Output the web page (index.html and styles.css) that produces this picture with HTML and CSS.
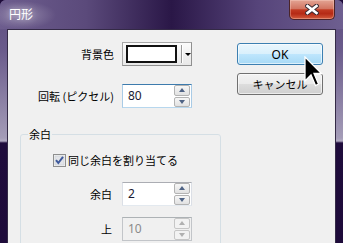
FILE: index.html
```html
<!DOCTYPE html>
<html lang="ja">
<head>
    <meta charset="UTF-8">
    <meta name="viewport" content="width=device-width, initial-scale=1.0">
    <title>円形</title>
    <link rel="stylesheet" href="styles.css">
</head>
<body>
    <div class="window">
        <!-- タイトルバー -->
        <div class="titlebar">
            <span class="title">円形</span>
            <button class="close" title="閉じる">
                <svg width="14" height="11" viewBox="0 0 14 11">
                    <path d="M2.5 2 L11.5 9 M11.5 2 L2.5 9" stroke="#3b2b33" stroke-width="4.6" stroke-linecap="square"/>
                    <path d="M2.5 2 L11.5 9 M11.5 2 L2.5 9" stroke="#fff" stroke-width="2.6" stroke-linecap="square"/>
                </svg>
            </button>
        </div>

        <div class="client">
            <div class="form">
                <div class="fields">
                    <span class="field-label">背景色</span>
                    <div class="color-button">
                        <span class="swatch"></span>
                        <span class="separator"></span>
                        <span class="drop-arrow"></span>
                    </div>

                    <span class="field-label">回転 (ピクセル)</span>
                    <div class="spin focused">
                        <span class="spin-value">80</span>
                        <span class="spin-arrows">
                            <span class="spin-arrow"><span class="arrow-up"></span></span>
                            <span class="spin-arrow"><span class="arrow-down"></span></span>
                        </span>
                    </div>
                </div>

                <!-- 余白 -->
                <fieldset class="group">
                    <legend>余白</legend>
                    <label class="check">
                        <span class="checkbox">
                            <svg width="13" height="13" viewBox="0 0 13 13">
                                <rect x="0.5" y="0.5" width="12" height="12" fill="#f4f4f4" stroke="#8e8f8f"/>
                                <rect x="2" y="2" width="9" height="9" fill="#e2e4e8" stroke="#c8ccd2" stroke-width="0.6"/>
                                <path d="M3 6.2 L5.3 9 L10 2.8" fill="none" stroke="#3f5a9c" stroke-width="2"/>
                            </svg>
                        </span>
                        同じ余白を割り当てる
                    </label>

                    <div class="fields fields-inner">
                        <span class="field-label">余白</span>
                        <div class="spin">
                            <span class="spin-value">2</span>
                            <span class="spin-arrows">
                                <span class="spin-arrow"><span class="arrow-up"></span></span>
                                <span class="spin-arrow"><span class="arrow-down"></span></span>
                            </span>
                        </div>

                        <span class="field-label">上</span>
                        <div class="spin disabled">
                            <span class="spin-value">10</span>
                            <span class="spin-arrows">
                                <span class="spin-arrow"><span class="arrow-up"></span></span>
                                <span class="spin-arrow"><span class="arrow-down"></span></span>
                            </span>
                        </div>
                    </div>
                </fieldset>
            </div>

            <div class="actions">
                <button class="btn btn-ok">OK</button>
                <button class="btn">キャンセル</button>
            </div>

            <!-- マウスカーソル -->
            <svg class="cursor" width="20" height="31" viewBox="0 0 20 31">
                <path d="M1 1 L1 25 L7 19 L11.5 29.5 L14.5 28 L10 17.5 L17.5 17.5 Z" fill="#000" stroke="#fff" stroke-width="1.3" stroke-linejoin="miter"/>
            </svg>
        </div>
    </div>
</body>
</html>
```

FILE: styles.css
```css
/* 全体 */
* {
    box-sizing: border-box;
    margin: 0;
    padding: 0;
}

body {
    font-family: 'Noto Sans CJK JP', sans-serif;
    font-size: 11px;
    color: #000;
    background: #1e0b3a;
}

.window {
    width: 343px;
    height: 243px;
    display: flex;
    flex-direction: column;
    overflow: hidden;
    border-radius: 6px 6px 0 0;
    background: linear-gradient(to bottom, #5d4c7f 0, #6a5b8b 50px, #a49cb7 138px, #b2abc3 141px, #1f0c3c 143px, #1e0b3a 100%);
}

/* タイトルバー */
.titlebar {
    height: 29px;
    flex-shrink: 0;
    display: flex;
    align-items: flex-start;
    padding-left: 9px;
    background:
        radial-gradient(ellipse 34px 14px at 22px 15px, rgba(255, 255, 255, 0.28), transparent),
        linear-gradient(to right, #6d5d8e 0%, #5b4a7b 25%, #2a1747 50%, #56447a 75%, #6e5f90 100%);
}

.title {
    margin-top: 7px;
    font-size: 12px;
    line-height: 14px;
    color: #fff;
    text-shadow: 0 0 6px rgba(255, 255, 255, 0.7);
}

.close {
    margin-left: auto;
    margin-right: 8px;
    width: 46px;
    height: 20px;
    display: flex;
    align-items: center;
    justify-content: center;
    border: 1px solid #4a2428;
    border-top: none;
    border-radius: 0 0 5px 5px;
    background: linear-gradient(to bottom, #e3a494 0%, #d27562 45%, #c13a22 52%, #b52a15 72%, #d35c3d 100%);
    box-shadow: inset 0 0 0 1px rgba(255, 220, 210, 0.35);
}

/* 本体 */
.client {
    position: relative;
    flex: 1;
    display: flex;
    margin: 0 7px;
    padding-top: 12px;
    background: #f0f0f0;
    border: 1px solid #342a46;
    border-bottom: none;
}

.form {
    width: 212px;
}

.fields {
    display: grid;
    grid-template-columns: 106px 70px;
    grid-auto-rows: 24px;
    column-gap: 8px;
    row-gap: 18px;
    align-items: center;
}

.field-label {
    text-align: right;
    line-height: 16px;
}

/* 色ボタン */
.color-button {
    height: 24px;
    display: flex;
    align-items: center;
    padding-left: 3px;
    border: 1px solid #a7a7a7;
    border-right-color: #8f8f8f;
    border-bottom-color: #8f8f8f;
    background: linear-gradient(to bottom, #fbfbfb, #e8e8e8);
}

.swatch {
    width: 51px;
    height: 18px;
    background: #fff;
    border: 2px solid #111;
}

.separator {
    width: 1px;
    height: 18px;
    margin-left: 4px;
    background: #9a9a9a;
    box-shadow: 1px 0 0 #fff;
}

.drop-arrow {
    margin-left: 3px;
    width: 0;
    height: 0;
    border-left: 3px solid transparent;
    border-right: 3px solid transparent;
    border-top: 3px solid #000;
}

/* スピンボックス */
.spin {
    height: 24px;
    display: flex;
    background: #fff;
    border: 1px solid #dbdfe6;
    border-top-color: #abadb3;
    border-bottom-color: #e3e9ef;
}

.spin.focused {
    border-color: #a9cbe6;
    border-top-color: #3d7bad;
    border-bottom-color: #b7d7ee;
}

.spin.disabled {
    background: #f0f0f0;
    border-color: #c2c5c9;
    border-top-color: #adb2b5;
    color: #6d6d6d;
}

.spin-value {
    flex: 1;
    padding-left: 5px;
    font-family: 'Noto Sans', 'Noto Sans CJK JP', sans-serif;
    font-size: 12px;
    line-height: 21px;
    color: #1a1a33;
}

.spin.disabled .spin-value {
    color: #8a8a8a;
}

.spin-arrows {
    width: 17px;
    display: flex;
    flex-direction: column;
    gap: 1px;
    padding: 0 1px 0 0;
}

.spin-arrow {
    flex: 1;
    display: flex;
    align-items: center;
    justify-content: center;
    border: 1px solid #b3b3b3;
    border-radius: 2px;
    background: linear-gradient(to bottom, #f7f7f7, #e1e1e1);
}

.arrow-up,
.arrow-down {
    width: 0;
    height: 0;
    border-left: 3.5px solid transparent;
    border-right: 3.5px solid transparent;
}

.arrow-up {
    border-bottom: 4px solid #4f6385;
}

.arrow-down {
    border-top: 4px solid #4f6385;
}

.spin.disabled .spin-arrow {
    border-color: #c6c6c6;
    background: #f2f2f2;
}

.spin.disabled .arrow-up {
    border-bottom-color: #b0b0b0;
}

.spin.disabled .arrow-down {
    border-top-color: #b0b0b0;
}

/* グループ */
.group {
    width: 201px;
    margin: 18px 0 0 12px;
    padding: 0 0 30px 0;
    border: 1px solid #d5dfe5;
    border-radius: 3px;
}

.group legend {
    margin-left: 7px;
    padding: 0 1px;
    line-height: 16px;
}

.check {
    display: flex;
    align-items: center;
    height: 16px;
    margin: 10px 0 0 32px;
    gap: 2px;
}

.checkbox {
    width: 13px;
    height: 13px;
    display: flex;
}

.fields-inner {
    grid-template-columns: 91px 70px;
    column-gap: 10px;
    row-gap: 11px;
    margin-top: 14px;
}

/* ボタン */
.actions {
    display: flex;
    flex-direction: column;
    gap: 8px;
    margin: 1px 0 0 17px;
}

.btn {
    width: 86px;
    height: 22px;
    font-family: 'Noto Sans', 'Noto Sans CJK JP', sans-serif;
    font-size: 11px;
    color: #000;
    border: 1px solid #707070;
    border-radius: 3px;
    background: linear-gradient(to bottom, #f2f2f2 0%, #ebebeb 50%, #dddddd 51%, #cfcfcf 100%);
    box-shadow: inset 0 0 0 1px rgba(255, 255, 255, 0.6);
}

.btn-ok {
    font-size: 12px;
    border-color: #3c7fb1;
    background: linear-gradient(to bottom, #eaf6fd 0%, #d9f0fc 50%, #bee6fd 51%, #a7d9f5 100%);
}

.cursor {
    position: absolute;
    left: 296px;
    top: 26px;
}
```
